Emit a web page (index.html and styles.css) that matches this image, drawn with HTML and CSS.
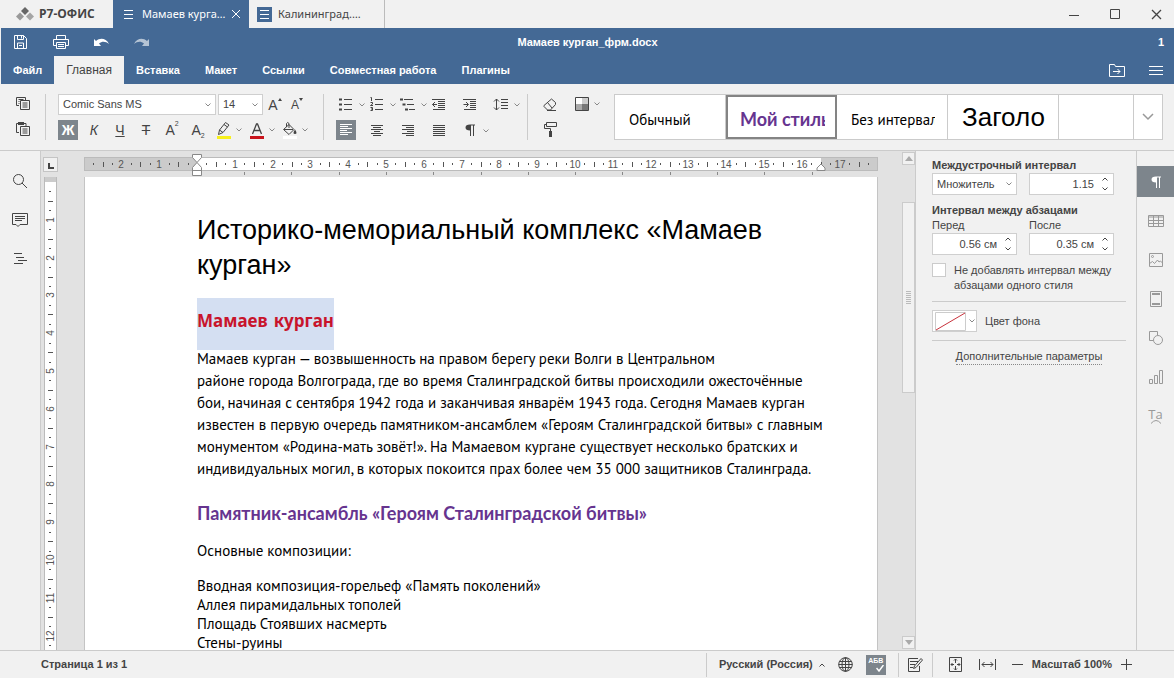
FILE: index.html
```html
<!DOCTYPE html>
<html lang="ru">
<head>
<meta charset="utf-8">
<title>Мамаев курган_фрм.docx</title>
<link rel="stylesheet" href="styles.css">
</head>
<body>
<svg class="sprite" aria-hidden="true">
  <symbol id="caret" viewBox="0 0 6 4"><path d="M.5.5 3 3 5.5.5"/></symbol>
  <symbol id="menu" viewBox="0 0 14 10"><path d="M0 1.500h14M0 5.500h14M0 9.500h14"/></symbol>
  <symbol id="doc" viewBox="0 0 10 9"><path d="M0 .5h9M0 4.500h9M0 8.500h9"/></symbol>
  <symbol id="pilcrow" viewBox="0 0 20 20"><path class="solid" d="M10 4.500h5v1h-1V16h-1V5.500h-2V16h-1v-5.500C7 10.500 5.500 9.500 5.500 7.500S7 4.500 10 4.500z"/></symbol>
</svg>
<div class="app">
  <header class="titlebar">
    <div class="brand">
      <svg width="18" height="14" viewBox="0 0 18 14"><path fill="#666" d="M9 0l4 4-4 4-4-4z"/><path fill="#999" d="M4 5.500l4 4-4 4-4-4z"/><path fill="#a5a5a5" d="M14 5.500l4 4-4 4-4-4z"/></svg>
      <span>Р7-ОФИС</span>
    </div>
    <div class="doc-tab doc-tab-active">
      <svg class="ico tab-ico" width="10" height="9"><use href="#doc"/></svg>
      <span class="tab-name">Мамаев курга…</span>
      <button class="tab-close" aria-label="Закрыть вкладку"><svg class="ico" width="8" height="8" viewBox="0 0 8 8"><path d="M0 0l8 8M8 0L0 8"/></svg></button>
    </div>
    <div class="doc-tab doc-tab-idle">
      <span class="tab-badge"><svg class="ico" width="9" height="9" viewBox="0 0 9 9"><use href="#doc" width="10" height="9"/></svg></span>
      <span class="tab-name">Калининград.…</span>
    </div>
    <div class="window-controls">
      <button aria-label="Свернуть"><svg class="ico" width="11" height="11" viewBox="0 0 11 11"><path d="M0 6.500h10"/></svg></button>
      <button aria-label="Развернуть"><svg class="ico" width="11" height="11" viewBox="0 0 11 11"><path d="M.5.5h9v9h-9z"/></svg></button>
      <button aria-label="Закрыть"><svg class="ico" width="11" height="11" viewBox="0 0 11 11"><path d="M1 1l9 9M10 1l-9 9" stroke-width="1.300"/></svg></button>
    </div>
  </header>

  <div class="ribbon-head">
    <div class="quick">
      <div class="quick-buttons">
        <button aria-label="Сохранить"><svg class="ico" width="14" height="14" viewBox="0 0 14 14"><path d="M.5.5h9l3 3v10H.5zM3.500.5v4h6v-4M3.500 13v-5h6v5M7.500 1v2.500M5 10.500h3" /></svg></button>
        <button aria-label="Печать"><svg class="ico" width="16" height="14" viewBox="0 0 16 14"><path d="M3.500 4.500v-4h9v4M3.500 10.500h-3v-6h15v6h-3M3.500 7.500h9v6h-9zM5 9.500h6M5 11.500h6"/></svg></button>
        <button aria-label="Отменить"><svg class="ico" width="15" height="9" viewBox="0 0 15 9"><path class="solid" d="M0 1l2 2C6-.5 12 0 15 6 11.500 3 8 3 5 5.500L7 8H0z"/></svg></button>
        <button aria-label="Вернуть" class="dim"><svg class="ico" width="15" height="9" viewBox="0 0 15 9"><path class="solid" d="M15 1l-2 2C9-.5 3 0 0 6 3.500 3 7 3 10 5.500L8 8h7z"/></svg></button>
      </div>
      <h1 class="file-name">Мамаев курган_фрм.docx</h1>
      <span class="users">1</span>
    </div>
    <nav class="menu">
      <a href="#">Файл</a>
      <a href="#" class="current">Главная</a>
      <a href="#">Вставка</a>
      <a href="#">Макет</a>
      <a href="#">Ссылки</a>
      <a href="#">Совместная работа</a>
      <a href="#">Плагины</a>
      <div class="menu-right">
        <button aria-label="Открыть папку"><svg class="ico" width="16" height="13" viewBox="0 0 16 13"><path d="M.5.5h5l1 2h9v10H.5zM4 7.500h7M8.500 5l2.500 2.500L8.500 10"/></svg></button>
        <button aria-label="Меню"><svg class="ico" width="14" height="10"><use href="#menu"/></svg></button>
      </div>
    </nav>
  </div>

  <div class="toolbar">
    <div class="group clip">
      <button class="tb" aria-label="Копировать"><svg class="ico" width="16" height="16" viewBox="0 0 16 16"><path d="M4 9.500H1.500v-8h9V4M3.500 3.500h5M3.500 5.500h1M3.500 7.500h1M5.500 4.500h9v9h-9zM7.500 7h5M7.500 9h5M7.500 11h5"/></svg></button>
      <button class="tb" aria-label="Вставить"><svg class="ico" width="16" height="16" viewBox="0 0 16 16"><path d="M4 11.500H1.500v-9h2M9 2.500h2V5M5.500 5.500h9v9h-9zM7.500 8h5M7.500 10h5M7.500 12h5"/><path class="solid" d="M3 1h6v3H3z"/></svg></button>
    </div>
    <div class="group group-font">
      <div class="row">
        <label class="combo combo-font"><select aria-label="Шрифт"><option>Comic Sans MS</option></select><svg class="ico" width="6" height="4"><use href="#caret"/></svg></label>
        <label class="combo combo-size"><select aria-label="Размер шрифта"><option>14</option></select><svg class="ico" width="6" height="4"><use href="#caret"/></svg></label>
        <button class="tb letter" aria-label="Увеличить шрифт">A<svg class="ico tri" width="4" height="3" viewBox="0 0 4 3"><path class="solid" d="M2 0l2 3H0z"/></svg></button>
        <button class="tb letter letter-sm" aria-label="Уменьшить шрифт">A<svg class="ico tri" width="4" height="3" viewBox="0 0 4 3"><path class="solid" d="M2 3l2-3H0z"/></svg></button>
      </div>
      <div class="row row-format">
        <button class="tb letter on"><b>Ж</b></button>
        <button class="tb letter"><i>К</i></button>
        <button class="tb letter"><u>Ч</u></button>
        <button class="tb letter"><s>Т</s></button>
        <button class="tb letter">A<sup>2</sup></button>
        <button class="tb letter">A<sub>2</sub></button>
        <div class="split">
          <button class="tb" aria-label="Цвет выделения"><svg class="ico" width="16" height="18" viewBox="0 0 16 18"><path d="M3.500 9L9.500 1.500l3.500 2.500-6 7.500-4.500 2zM3.500 9l3.500 2.500M8 3.500l3.500 2.500"/><path fill="#f7f01c" stroke="none" d="M1 15h14v3H1z"/></svg></button>
          <button class="drop" aria-label="Выбрать цвет выделения"><svg class="ico" width="6" height="4"><use href="#caret"/></svg></button>
        </div>
        <div class="split">
          <button class="tb" aria-label="Цвет шрифта"><svg class="ico" width="16" height="18" viewBox="0 0 16 18"><path d="M3.500 13L7.500 3h1l4 10M5 9.500h6" stroke-width="1.300"/><path fill="#c8141c" stroke="none" d="M1 15h14v3H1z"/></svg></button>
          <button class="drop" aria-label="Выбрать цвет шрифта"><svg class="ico" width="6" height="4"><use href="#caret"/></svg></button>
        </div>
        <div class="split">
          <button class="tb" aria-label="Заливка"><svg class="ico" width="16" height="18" viewBox="0 0 16 18"><path d="M7 3.500l5 5-5 5-5.500-5zM2 8.500h9M4.500 6V2.500q1-2 2.500 0V7"/><path class="solid" d="M13 8.500q3 4.500 0 4.500t0-4.500z"/><path fill="#fff" stroke="none" d="M1 15h14v3H1z"/></svg></button>
          <button class="drop" aria-label="Выбрать заливку"><svg class="ico" width="6" height="4"><use href="#caret"/></svg></button>
        </div>
      </div>
    </div>
    <div class="group">
      <div class="pairs">
        <div class="split"><button class="tb" aria-label="Маркеры"><svg class="ico" width="14" height="14" viewBox="0 0 14 14"><path d="M5 2.500h8M5 7.500h8M5 12.500h8"/><path class="solid" d="M0 1.500h3v2H0zM0 6.500h3v2H0zM0 11.500h3v2H0z"/></svg></button><button class="drop" aria-label="Вид маркеров"><svg class="ico" width="6" height="4"><use href="#caret"/></svg></button></div>
        <div class="split"><button class="tb" aria-label="Нумерация"><svg class="ico" width="14" height="14" viewBox="0 0 14 14"><path d="M5 2.500h8M5 7.500h8M5 12.500h8M.5.5h1v3.500M.5 5.500h2v1.500l-2 1.500h2.500M.5 10.500h2v3h-2M1 12h1.500"/></svg></button><button class="drop" aria-label="Вид нумерации"><svg class="ico" width="6" height="4"><use href="#caret"/></svg></button></div>
        <div class="split"><button class="tb" aria-label="Многоуровневый список"><svg class="ico" width="16" height="14" viewBox="0 0 16 14"><path d="M4 2.500h9M7 7.500h7M9 12.500h6"/><path class="solid" d="M0 1.500h3v2H0zM2.500 6.500h3v2h-3zM5 11.500h3v2H5z"/></svg></button><button class="drop" aria-label="Вид списка"><svg class="ico" width="6" height="4"><use href="#caret"/></svg></button></div>
        <button class="tb" aria-label="Уменьшить отступ"><svg class="ico" width="14" height="12" viewBox="0 0 14 12"><path d="M0 .5h13M6 2.500h7M6 4.500h7M6 6.500h7M6 8.500h7M1 10.500h12M.5 5.500H5M3 3L.5 5.500 3 8"/></svg></button>
        <button class="tb" aria-label="Увеличить отступ"><svg class="ico" width="14" height="12" viewBox="0 0 14 12"><path d="M0 .5h13M7 2.500h6M7 4.500h6M7 6.500h6M7 8.500h6M1 10.500h12M.5 5.500H5M3 3l2.500 2.500L3 8"/></svg></button>
        <div class="split"><button class="tb" aria-label="Междустрочный интервал"><svg class="ico" width="16" height="13" viewBox="0 0 16 13"><path d="M3.500 1v11M1 3.500L3.500 1 6 3.500M1 9.500L3.500 12 6 9.500M8 1.500h7M8 4.500h7M8 7.500h7M8 10.500h7"/></svg></button><button class="drop" aria-label="Выбрать интервал"><svg class="ico" width="6" height="4"><use href="#caret"/></svg></button></div>
        <button class="tb on" aria-label="По левому краю"><svg class="ico" width="12" height="12" viewBox="0 0 12 12"><path d="M0 .5h12M0 2.500h8M0 4.500h12M0 6.500h7M0 8.500h12M0 10.500h8"/></svg></button>
        <button class="tb" aria-label="По центру"><svg class="ico" width="12" height="12" viewBox="0 0 12 12"><path d="M0 .5h12M2 2.500h8M0 4.500h12M3 6.500h6M0 8.500h12M2 10.500h8"/></svg></button>
        <button class="tb" aria-label="По правому краю"><svg class="ico" width="12" height="12" viewBox="0 0 12 12"><path d="M0 .5h12M4 2.500h8M0 4.500h12M5 6.500h7M0 8.500h12M4 10.500h8"/></svg></button>
        <button class="tb" aria-label="По ширине"><svg class="ico" width="12" height="12" viewBox="0 0 12 12"><path d="M0 .5h12M0 2.500h12M0 4.500h12M0 6.500h12M0 8.500h12M0 10.500h12"/></svg></button>
        <div class="split"><button class="tb" aria-label="Непечатаемые символы"><svg class="ico" width="20" height="20"><use href="#pilcrow"/></svg></button><button class="drop" aria-label="Параметры символов"><svg class="ico" width="6" height="4"><use href="#caret"/></svg></button></div>
      </div>
    </div>
    <div class="group group-tools">
      <div class="row row-tools">
        <button class="tb" aria-label="Очистить стиль"><svg class="ico" width="14" height="13" viewBox="0 0 14 13"><path d="M8.500 1l4 3.500v2l-5 5.500H4.500L1 8.500v-1zM4.500 4.500l4.500 5.500M4 12.500h9"/></svg></button>
        <div class="split"><button class="tb" aria-label="Цветовая схема"><svg class="ico" width="14" height="14" viewBox="0 0 14 14"><path fill="#fff" stroke="none" d="M1 1h6v6H1z"/><path fill="#ccc" stroke="none" d="M7 1h6v6H7z"/><path fill="#aaa" stroke="none" d="M1 7h6v6H1z"/><path fill="#777" stroke="none" d="M7 7h6v6H7z"/><path d="M.5.5h13v13H.5z"/></svg></button><button class="drop" aria-label="Выбрать схему"><svg class="ico" width="6" height="4"><use href="#caret"/></svg></button></div>
      </div>
      <div class="row"><button class="tb" aria-label="Копировать стиль"><svg class="ico" width="13" height="15" viewBox="0 0 13 15"><path d="M2.500.5h10v4h-10zM2.500 2.500h-2v4h6V9"/><path class="solid" d="M5 9h3v6H5z"/></svg></button></div>
    </div>
    <div class="styles">
      <button class="style-card"><span>Обычный</span></button>
      <button class="style-card style-chosen"><span class="style-mine">Мой стиль</span></button>
      <button class="style-card"><span>Без интервала</span></button>
      <button class="style-card"><span class="style-title">Заголовок</span></button>
      <button class="style-card style-empty" aria-label="Пустой стиль"></button>
      <button class="style-more" aria-label="Все стили"><svg class="ico" width="12" height="8" viewBox="0 0 12 8"><path d="M1 1l5 5 5-5" stroke-width="1.500"/></svg></button>
    </div>
  </div>

  <main class="work">
    <aside class="left-bar">
      <button aria-label="Поиск"><svg class="ico" width="16" height="16" viewBox="0 0 16 16"><circle cx="6.500" cy="6.500" r="5"/><path d="M10 10l5 5"/></svg></button>
      <button aria-label="Комментарии"><svg class="ico" width="16" height="16" viewBox="0 0 16 16"><path d="M.5 1.500h15v11H8l-2 2-2-2H.5zM3 4.500h10M3 6.500h10M3 8.500h7"/></svg></button>
      <button aria-label="Навигация"><svg class="ico" width="14" height="12" viewBox="0 0 14 12"><path d="M1 .5h8M3 4.500h8M5 7.500h9M1 10.500h9"/></svg></button>
    </aside>

    <section class="editor">
      <div class="corner"><button aria-label="Тип табуляции"><svg class="ico" width="6" height="6" viewBox="0 0 6 6"><path d="M1 0v5h5" stroke-width="2"/></svg></button></div>
      <div class="h-ruler-box"><svg class="ruler h-ruler" id="hRuler" viewBox="0 0 794 26"></svg></div>
      <div class="v-ruler-box"><svg class="ruler" id="vRuler" width="14" height="1200"></svg></div>
      <div class="canvas">
        <article class="page">
          <h2 class="doc-title">Историко-мемориальный комплекс «Мамаев<br>курган»</h2>
          <h3 class="doc-selected"><mark>Мамаев курган</mark></h3>
          <p class="doc-body">Мамаев курган — возвышенность на правом берегу реки Волги в Центральном<br>районе города Волгограда, где во время Сталинградской битвы происходили ожесточённые<br>бои, начиная с сентября 1942 года и заканчивая январём 1943 года. Сегодня Мамаев курган<br>известен в первую очередь памятником-ансамблем «Героям Сталинградской битвы» с главным<br>монументом «Родина-мать зовёт!». На Мамаевом кургане существует несколько братских и<br>индивидуальных могил, в которых покоится прах более чем 35 000 защитников Сталинграда.</p>
          <h3 class="doc-sub">Памятник-ансамбль «Героям Сталинградской битвы»</h3>
          <p class="doc-lead">Основные композиции:</p>
          <p class="doc-list">Вводная композиция-горельеф «Память поколений»<br>Аллея пирамидальных тополей<br>Площадь Стоявших насмерть<br>Стены-руины</p>
        </article>
      </div>
    </section>

    <div class="scroll">
      <button aria-label="Вверх"><svg class="ico" width="8" height="5" viewBox="0 0 8 5"><path fill="#aaa" stroke="none" d="M4 0l4 5H0z"/></svg></button>
      <div class="track"><div class="thumb"><svg class="ico" width="5" height="13" viewBox="0 0 5 13"><path d="M0 .5h5M0 2.500h5M0 4.500h5M0 6.500h5M0 8.500h5M0 10.500h5M0 12.500h5"/></svg></div></div>
      <button aria-label="Вниз"><svg class="ico" width="8" height="5" viewBox="0 0 8 5"><path fill="#aaa" stroke="none" d="M4 5l4-5H0z"/></svg></button>
    </div>

    <aside class="panel">
      <h2>Междустрочный интервал</h2>
      <div class="fields">
        <label class="combo"><select aria-label="Междустрочный интервал"><option>Множитель</option></select><svg class="ico" width="6" height="4"><use href="#caret"/></svg></label>
        <div class="spin"><input type="text" value="1.15" aria-label="Значение интервала"><span class="spin-buttons"><button aria-label="Больше"><svg class="ico up" width="6" height="4"><use href="#caret"/></svg></button><button aria-label="Меньше"><svg class="ico" width="6" height="4"><use href="#caret"/></svg></button></span></div>
      </div>
      <h2 class="second">Интервал между абзацами</h2>
      <div class="fields">
        <div><label for="before">Перед</label>
          <div class="spin"><input id="before" type="text" value="0.56 см"><span class="spin-buttons"><button aria-label="Больше"><svg class="ico up" width="6" height="4"><use href="#caret"/></svg></button><button aria-label="Меньше"><svg class="ico" width="6" height="4"><use href="#caret"/></svg></button></span></div></div>
        <div><label for="after">После</label>
          <div class="spin"><input id="after" type="text" value="0.35 см"><span class="spin-buttons"><button aria-label="Больше"><svg class="ico up" width="6" height="4"><use href="#caret"/></svg></button><button aria-label="Меньше"><svg class="ico" width="6" height="4"><use href="#caret"/></svg></button></span></div></div>
      </div>
      <label class="check"><input type="checkbox"><span>Не добавлять интервал между<br>абзацами одного стиля</span></label>
      <div class="fill-row">
        <button class="swatch" id="fill" aria-label="Цвет фона"><svg class="ico" width="31" height="19" viewBox="0 0 31 19"><path fill="#fff" stroke="#ccc" d="M.5.5h30v18H.5z"/><path d="M1 18L30 1" stroke="#c8323c"/></svg><svg class="ico faint" width="6" height="4"><use href="#caret"/></svg></button>
        <label for="fill">Цвет фона</label>
      </div>
      <div class="more"><a href="#">Дополнительные параметры</a></div>
    </aside>

    <aside class="right-bar">
      <button class="on" aria-label="Параметры абзаца"><svg class="ico" width="20" height="20"><use href="#pilcrow"/></svg></button>
      <button aria-label="Таблица"><svg class="ico" width="16" height="12" viewBox="0 0 16 12"><path d="M.5.5h15v11H.5zM0 2h16M0 5.500h16M0 8.500h16M5.500 1v10M10.500 1v10"/></svg></button>
      <button aria-label="Изображение"><svg class="ico" width="14" height="14" viewBox="0 0 14 14"><path d="M.5.5h13v13H.5zM.5 10.500l3-2 2 2 3-3.500 1.500 2 1.500-1 2 2"/><circle cx="3.500" cy="3.500" r="1"/></svg></button>
      <button aria-label="Колонтитулы"><svg class="ico" width="12" height="16" viewBox="0 0 12 16"><path d="M.5.5h11v15H.5z"/><path d="M2 3h8M2 13h8" stroke-width="2"/></svg></button>
      <button aria-label="Фигура"><svg class="ico" width="14" height="14" viewBox="0 0 14 14"><path d="M4 9.500H.5v-9h8V4"/><circle cx="9" cy="9" r="4.500"/></svg></button>
      <button aria-label="Диаграмма"><svg class="ico" width="14" height="14" viewBox="0 0 14 14"><path d="M.5 9.500h3v4h-3zM5.500 5.500h3v8h-3zM10.500.5h3v13h-3z"/></svg></button>
      <button class="text-art" aria-label="Объект Text Art"><span>Ta</span><svg class="ico" width="10" height="4" viewBox="0 0 10 4"><path d="M0 3.500q5-6 10 0"/></svg></button>
    </aside>
  </main>

  <footer class="status">
    <span class="page-count">Страница 1 из 1</span>
    <div class="status-group lang">
      <button class="lang-button">Русский (Россия)<svg class="ico up" width="6" height="4"><use href="#caret"/></svg></button>
      <button aria-label="Язык документа"><svg class="ico" width="15" height="15" viewBox="0 0 15 15"><circle cx="7.500" cy="7.500" r="6.800"/><ellipse cx="7.500" cy="7.500" rx="3.500" ry="6.800"/><path d="M7.500.5v14M.5 7.500h14M1.500 4.500h12M1.500 10.500h12"/></svg></button>
      <button class="tb on spell" aria-label="Проверка орфографии"><span>АБВ</span><svg class="ico" width="8" height="7" viewBox="0 0 8 7"><path d="M.5 3l2.500 3L7.500 0" stroke-width="1.500"/></svg></button>
    </div>
    <div class="status-group track-changes">
      <button aria-label="Отслеживание изменений"><svg class="ico" width="15" height="15" viewBox="0 0 15 15"><path d="M10 1.500H.5v13h11V9M2 4.500h8M2 7.500h5M2 10.500h3M6.500 9l6.500-7.500 1.500 1.500L8 10.500l-2.500 1z"/></svg></button>
    </div>
    <div class="status-group zoom">
      <button aria-label="По размеру страницы"><svg class="ico" width="14" height="15" viewBox="0 0 14 15"><path d="M.5.5h12v14H.5zM6.500 2v4M6.500 9v4M2 7.500h3M8 7.500h3M5 3.500L6.500 2 8 3.500M5 11.500L6.500 13 8 11.500M3.500 6L2 7.500 3.500 9M9.500 6L11 7.500 9.500 9"/></svg></button>
      <button aria-label="По ширине"><svg class="ico" width="17" height="11" viewBox="0 0 17 11"><path d="M.5 0v11M16.500 0v11M3 5.500h11M5.500 3L3 5.500 5.500 8M11.500 3L14 5.500 11.500 8"/></svg></button>
      <button aria-label="Уменьшить"><svg class="ico" width="11" height="11" viewBox="0 0 11 11"><path d="M0 5.500h11"/></svg></button>
      <span class="zoom-value">Масштаб 100%</span>
      <button aria-label="Увеличить"><svg class="ico" width="11" height="11" viewBox="0 0 11 11"><path d="M0 5.500h11M5.500 0v11"/></svg></button>
    </div>
  </footer>
</div>
<script src="rulers.js"></script>
</body>
</html>
```
FILE: styles.css
```css
* { box-sizing: border-box; }
body {
  margin: 0;
  background: #f1f1f1;
  color: #444;
  font: 11px/15px "Liberation Sans", Arial, sans-serif;
}
h1, h2, h3, p { margin: 0; font: inherit; }
button, input, select { font: inherit; color: inherit; margin: 0; }
button {
  display: flex;
  align-items: center;
  justify-content: center;
  padding: 0;
  border: 0;
  background: none;
}
a { color: inherit; text-decoration: none; }
.sprite { position: absolute; width: 0; height: 0; }
.ico { display: block; flex: none; fill: none; stroke: currentColor; }
.ico .solid, .solid { fill: currentColor; stroke: none; }
.up { transform: rotate(180deg); }
.faint { color: #888; }

.app { display: flex; flex-direction: column; height: 100vh; overflow: hidden; }

/* Title bar */
.titlebar { display: flex; height: 28px; flex: none; }
.brand { display: flex; align-items: center; gap: 5px; width: 113px; padding-left: 16px; font: bold 12px/16px "Open Sans", sans-serif; }
.doc-tab { display: flex; align-items: center; width: 136px; }
.doc-tab-active { background: #446995; color: #fff; padding-left: 11px; gap: 8px; }
.doc-tab-idle { gap: 6px; padding-left: 8px; border-right: 1px solid #bbb; }
.tab-name { flex: 1; width: 0; white-space: nowrap; font: 11px/16px "Noto Sans", sans-serif; }
.tab-badge { display: flex; align-items: center; justify-content: center; width: 15px; height: 15px; background: #446995; color: #fff; }
.tab-close { width: 8px; margin-right: 9px; }
.window-controls { display: flex; gap: 5px; margin-left: auto; }
.window-controls button { width: 36px; }

/* Blue header */
.ribbon-head { flex: none; margin-left: 1px; background: #446995; color: #fff; font-weight: bold; }
.quick { display: flex; align-items: center; height: 28px; }
.quick-buttons { display: flex; flex: 1; padding-right: 10px; }
.quick-buttons button { width: 40px; height: 28px; }
.dim { opacity: .6; }
.users { flex: 1; padding-right: 10px; text-align: right; }
.menu { display: flex; height: 28px; line-height: 28px; }
.menu a { padding: 0 12px; }
.menu .current { background: #f1f1f1; color: #444; font-size: 12px; font-weight: normal; }
.menu .current ~ a { padding-right: 13px; }
.menu-right { display: flex; gap: 24px; margin-left: auto; padding-right: 11px; }

/* Toolbar */
.toolbar { display: flex; flex: none; height: 67px; padding: 10px 11px 10px 0; border-bottom: 1px solid #cbcbcb; }
.group { display: flex; flex: none; flex-direction: column; gap: 5px; padding: 0 12px; border-right: 1px solid #cbcbcb; }
.clip { width: 46px; padding: 0 0 0 13px; }
.group-font { padding-right: 13px; }
.row { display: flex; gap: 2px; align-items: center; min-height: 20px; }
.row-format { gap: 3px; }
.row-format > .tb { margin-right: 3px; }
.tb { width: 20px; height: 20px; flex: none; }
.on { background: #7d858c; color: #fff; }
.split { display: flex; }
.drop { width: 11px; color: #888; }
.row-format .drop { width: 10px; }
.combo { display: flex; align-items: center; position: relative; height: 21px; background: #fff; border: 1px solid #cfcfcf; }
.combo select { appearance: none; width: 100%; height: 100%; padding: 0 4px; border: 0; background: none; }
.combo .ico { position: absolute; right: 4px; color: #888; pointer-events: none; }
.combo-font { width: 158px; }
.combo-size { width: 45px; }
.letter { font-size: 14px; line-height: 20px; }
.letter-sm { font-size: 12px; }
.letter sup, .letter sub { font-size: 7px; line-height: 8px; }
.letter sup { align-self: flex-start; }
.letter sub { align-self: flex-end; }
.tri { align-self: flex-start; margin-top: 3px; }
.pairs { display: grid; grid-template-columns: repeat(6, 31px); row-gap: 5px; width: 179px; }
.pairs > * { height: 21px; }
.pairs > .on { height: 20px; }
.group-tools { border-right: 0; width: 86px; }
.group-tools .drop { width: 10px; }
.row-tools { gap: 12px; }
.styles { display: flex; flex: 1; min-width: 0; height: 46px; background: #fff; border: 1px solid #cbcbcb; color: #000; }
.style-card { flex: none; justify-content: flex-start; width: 111px; padding: 6px 12px 0 14px; border-right: 1px solid #cbcbcb; font: 15px/20px "PT Sans", "Noto Sans", sans-serif; }
.style-card span { flex: 1; overflow: hidden; text-align: left; white-space: nowrap; }
.style-chosen { padding: 4px 10px 0 12px; border: 2px solid #848484; }
.style-card .style-mine { color: #66348f; font: bold 18px/20px Lato, "Noto Sans", sans-serif; }
.style-card .style-title { font: 26px/32px "Liberation Sans", sans-serif; }
.style-card:nth-child(4) { padding-top: 0; }
.style-empty { flex: 1 1 0; }
.style-more { flex: none; width: 28px; color: #999; }

/* Work area */
.work { display: flex; flex: 1; min-height: 0; }
.left-bar { display: flex; flex-direction: column; align-items: center; gap: 23px; width: 41px; padding-top: 22px; border-right: 1px solid #cbcbcb; }
.left-bar button { width: 16px; height: 16px; }
.editor { display: grid; flex: 1; min-width: 0; grid-template: 26px minmax(0, 1fr) / 19px minmax(0, 1fr); background: #e2e2e2; }
.corner { padding: 6px 0 0 2px; }
.corner button { width: 15px; height: 15px; background: #f1f1f1; border: 1px solid #c4c4c4; padding: 3px 0 0 1px; }
.h-ruler-box { display: flex; justify-content: center; }
.v-ruler-box { padding-left: 3px; overflow: hidden; }
.ruler { display: block; fill: #555; font: 10px "Liberation Sans", sans-serif; }
.h-ruler { flex: none; width: 794px; height: 26px; }
.canvas { display: flex; justify-content: center; min-height: 0; overflow: hidden; }
.page { flex: none; width: 794px; padding: 36px 0 0 112px; background: #fff; border: 0 solid #c4c4c4; border-left-width: 1px; border-right-width: 1px; color: #000; white-space: nowrap; font-family: "PT Sans", "Noto Sans", sans-serif; }
.doc-title { font: 27px/35px "Liberation Sans", sans-serif; }
.doc-selected { margin-top: 15px; }
.doc-selected mark { display: inline-block; padding: 8px 0 12px; background: #d4dff2; color: #c8142c; font: bold 17px/32px "Comic Sans MS", "Comic Neue", "Noto Sans", sans-serif; }
.doc-body { margin-top: -2px; font-size: 15px; line-height: 22px; }
.doc-sub { margin-top: 21px; color: #66348f; font: bold 18px/24px Lato, "Noto Sans", sans-serif; }
.doc-lead { margin-top: 15px; font-size: 15px; line-height: 22px; }
.doc-list { margin-top: 14px; font-size: 15px; line-height: 19px; }

.scroll { display: flex; flex-direction: column; width: 14px; padding: 1px 0; background: #e2e2e2; border-right: 1px solid #cbcbcb; }
.scroll button { height: 13px; background: #f1f1f1; border: 1px solid #cbcbcb; }
.track { display: flex; flex: 1; flex-direction: column; }
.track::before { content: ""; flex: 37; }
.track::after { content: ""; flex: 244; }
.thumb { display: flex; flex: 190; align-items: center; justify-content: center; background: #f1f1f1; border: 1px solid #cbcbcb; color: #bbb; }

/* Paragraph panel */
.panel { width: 221px; padding: 7px 10px 0 16px; border-right: 1px solid #cbcbcb; }
.panel h2 { font-weight: bold; }
.panel .second { margin-top: 8px; }
.fields { display: grid; grid-template-columns: 85px 85px; gap: 12px; }
.fields label { display: block; }
.fields .combo { display: flex; height: 22px; }
.spin { display: flex; height: 22px; background: #fff; border: 1px solid #cfcfcf; }
.spin input { flex: 1; width: 0; padding: 0 2px 0 0; border: 0; background: none; text-align: right; }
.spin-buttons { display: flex; flex-direction: column; width: 17px; }
.spin-buttons button { flex: 1; }
.check { display: flex; gap: 8px; margin-top: 8px; }
.check input { appearance: none; flex: none; width: 14px; height: 14px; background: #fff; border: 1px solid #cbcbcb; }
.fill-row { display: flex; align-items: center; gap: 8px; margin-top: 8px; padding: 8px 0; border: solid #cbcbcb; border-width: 1px 0; }
.swatch { width: 45px; height: 22px; gap: 3px; background: #fff; border: 1px solid #cfcfcf; }
.more { margin-top: 8px; text-align: center; }
.more a { display: inline-block; border-bottom: 1px dotted #888; }

.right-bar { display: flex; flex-direction: column; gap: 8px; width: 37px; padding-top: 15px; color: #999; }
.right-bar button { height: 31px; }
.right-bar .on { color: #fff; }
.right-bar .text-art { flex-direction: column; font: 13px/12px "Open Sans", sans-serif; }

/* Status bar */
.status { display: flex; flex: none; height: 28px; border-top: 1px solid #cbcbcb; font-weight: bold; align-items: center; padding-right: 42px; }
.page-count { flex: 1; padding-left: 41px; }
.status-group { display: flex; align-items: center; height: 24px; border-left: 1px solid #cbcbcb; }
.lang { gap: 13px; padding: 0 12px; }
.lang-button { gap: 6px; }
.spell { flex-direction: column; }
.spell span { font-size: 7px; line-height: 8px; }
.spell .ico { align-self: flex-end; margin-right: 2px; }
.track-changes { padding: 0 9px; }
.zoom { padding-left: 16px; gap: 16px; }
.zoom-value { margin: 0 -7px; }
```
FILE: rulers.js
```js
const NS = "http://www.w3.org/2000/svg";
const CM = 37.8;

function add(svg, name, attrs, text) {
  const node = document.createElementNS(NS, name);
  for (const key in attrs) node.setAttribute(key, attrs[key]);
  if (text !== undefined) node.textContent = text;
  svg.appendChild(node);
}

function horizontal(svg) {
  const zero = 113, end = 737;
  add(svg, "rect", { x: 0.5, y: 6.5, width: 793, height: 13, fill: "#cbcbcb", stroke: "#bbb" });
  add(svg, "rect", { x: zero, y: 7, width: end - zero, height: 12, fill: "#fff" });
  for (let q = -11; q <= 71; q++) {
    const x = Math.round(zero + q * CM / 4);
    if (q === 0 || x > 788) continue;
    if (q % 4 === 0) add(svg, "text", { x: x, y: 17, "text-anchor": "middle" }, Math.abs(q / 4));
    else if (q % 2 === 0) add(svg, "rect", { x: x, y: 11, width: 1, height: 5 });
    else add(svg, "rect", { x: x, y: 12, width: 1, height: 2 });
  }
  for (let x = zero + 47; x < end; x += 47.3) add(svg, "rect", { x: Math.round(x), y: 21, width: 1, height: 3, fill: "#888" });
  const marker = { fill: "#fff", stroke: "#888" };
  add(svg, "path", { d: "M108.500 3.500h9v3l-4.500 5-4.500-5z", ...marker });
  add(svg, "path", { d: "M113 11.500l4.500 5v8h-9v-8zM108.500 19.500h9", ...marker });
  add(svg, "path", { d: "M737 13l4 4v2.500h-8V17z", ...marker });
}

function vertical(svg) {
  add(svg, "rect", { x: 0.5, y: -1, width: 12, height: 1300, fill: "#fff", stroke: "#bbb" });
  add(svg, "rect", { x: 1, y: 0, width: 11, height: 5, fill: "#cbcbcb" });
  for (let q = 1; q <= 110; q++) {
    const y = Math.round(5 + q * CM / 4);
    if (q % 4 === 0) add(svg, "text", { transform: `translate(10 ${y}) rotate(-90)`, "text-anchor": "middle" }, q / 4);
    else if (q % 2 === 0) add(svg, "rect", { x: 4, y: y, width: 5, height: 1 });
    else add(svg, "rect", { x: 5, y: y, width: 2, height: 1 });
  }
}

horizontal(document.getElementById("hRuler"));
vertical(document.getElementById("vRuler"));
```
